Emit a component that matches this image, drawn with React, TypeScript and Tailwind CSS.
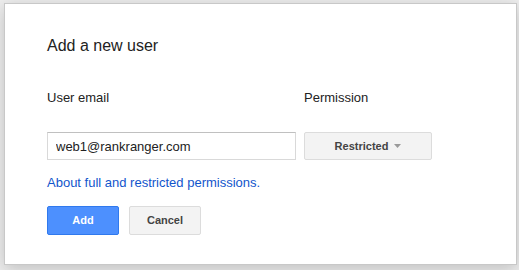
export default function App() {
  return (
    <div
      className="h-[270px] w-[519px] bg-[#eeeeee] pl-[4px] pt-[3px]"
      style={{ fontFamily: '"Liberation Sans", Arial, sans-serif' }}
    >
      <div className="h-[262px] w-[513px] border border-[#c8c8c8] bg-white pl-[42px] pt-[32px] shadow-[0_4px_16px_rgba(0,0,0,0.2)]">
        <h2 className="text-[16px] leading-[20px] text-[#222]">Add a new user</h2>

        <div className="mt-[34px] grid grid-cols-[249px_128px] gap-x-[8px]">
          <label className="text-[13px] leading-[16px] text-[#222]">User email</label>
          <label className="text-[13px] leading-[16px] text-[#222]">Permission</label>
          <input
            className="mt-[26px] h-[28px] border border-[#d9d9d9] border-t-[#c0c0c0] px-[8px] text-[13px] text-[#222] outline-none"
            defaultValue="web1@rankranger.com"
          />
          <button className="mt-[26px] flex h-[28px] items-center justify-center rounded-[2px] border border-[#dcdcdc] bg-[#f3f3f3] text-[11px] font-bold text-[#444]">
            Restricted
            <svg width="7" height="4" viewBox="0 0 7 4" className="ml-[6px]">
              <path d="M0 0h7L3.5 4z" fill="#9a9a9a" />
            </svg>
          </button>
        </div>

        <a className="mt-[15px] block text-[13px] leading-[16px] text-[#1155cc]">
          About full and restricted permissions.
        </a>

        <div className="mt-[15px] flex gap-[10px]">
          <button className="h-[29px] w-[72px] rounded-[2px] border border-[#3079ed] bg-[#4d90fe] text-[11px] font-bold text-white">
            Add
          </button>
          <button className="h-[29px] w-[72px] rounded-[2px] border border-[#dcdcdc] bg-[#f3f3f3] text-[11px] font-bold text-[#444]">
            Cancel
          </button>
        </div>
      </div>
    </div>
  );
}
